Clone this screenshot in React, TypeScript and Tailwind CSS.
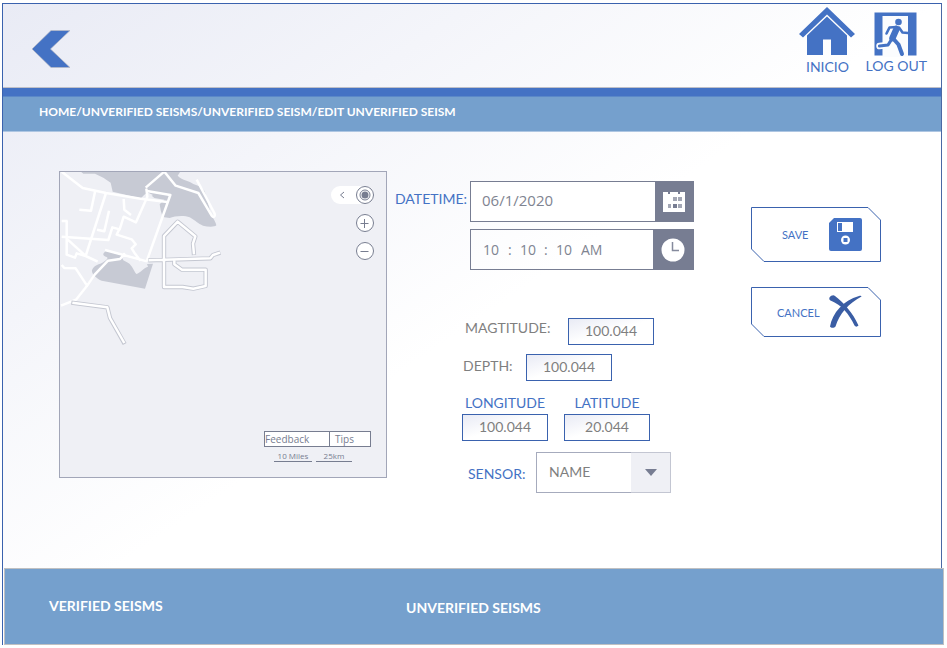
import type { ReactNode } from "react";

const calibri = "font-['Lato',Calibri,sans-serif]";
const segoe = "font-['Open_Sans','Segoe_UI',sans-serif]";

function HomeIcon() {
  return (
    <svg width="56" height="50" viewBox="0 0 56 50" fill="#4472c4" aria-hidden="true">
      <path d="M28 0 56 27l-4 3.500L28 7.500 4 30.500 0 27Z" />
      <path d="M28 9.500 48 28.500V48H32V32.500h-8V48H8V28.500Z" />
    </svg>
  );
}

function ExitIcon() {
  return (
    <svg width="44" height="45" viewBox="0 0 44 45" aria-hidden="true">
      <path d="M.5.5h42v43H.5Z" fill="#4472c4" />
      <path d="M8.500 4h25.500v41H8.500Z" fill="#fbfcfe" />
      <path d="M17.500 27.500 14 33 5.500 34" fill="none" stroke="#fbfcfe" strokeWidth="6.500" strokeLinecap="round" strokeLinejoin="round" />
      <circle cx="24.500" cy="10" r="3.300" fill="#4472c4" />
      <g fill="none" stroke="#4472c4" strokeLinecap="round" strokeLinejoin="round">
        <path d="M12.500 21.500 15.500 15.500 22.500 15" strokeWidth="2.600" />
        <path d="M22.500 17 18.500 26" strokeWidth="6.500" />
        <path d="M25 15.500 28.500 20.500 34 21" strokeWidth="2.600" />
        <path d="M17.500 27.500 14 33 5.500 34" strokeWidth="3.200" />
        <path d="M20 27.500 24.500 32.500 28 42" strokeWidth="4" />
      </g>
    </svg>
  );
}

function FloppyIcon() {
  return (
    <svg width="33" height="33" viewBox="0 0 33 33" aria-hidden="true">
      <path d="M5 0h26a2 2 0 0 1 2 2v29a2 2 0 0 1-2 2H2a2 2 0 0 1-2-2V5Z" fill="#4472c4" />
      <path d="M8 4h16v10H8Z" fill="#fff" />
      <path d="M9 5h4v8H9Z" fill="#4472c4" />
      <circle cx="16.500" cy="22" r="4.500" fill="#fff" />
      <path d="M14.500 20h4v4h-4Z" fill="#4472c4" />
    </svg>
  );
}

function CrossIcon() {
  return (
    <svg width="33" height="34" viewBox="0 0 33 34" fill="#3a5da4" aria-hidden="true">
      <path d="M.5 2.500C2 .5 4.500-.5 6 1c9 7 18 17 23.500 29.500-1.500 1.500-3 1.500-4 0C20 19 13 10 1.500 5.500.5 5 0 3.500.5 2.500Z" />
      <path d="M32.500 1.500C20 8 10 19 6.500 31.500c-1 1.500-4.500 2-5.500 0C3.500 18 14 5.500 30 1c1.500-.3 2.500-.3 2.500.5Z" />
    </svg>
  );
}

function CalendarIcon() {
  return (
    <svg width="22" height="22" viewBox="0 0 22 22" aria-hidden="true">
      <path d="M0 1h5v2h2V1h8v2h2V1h5v20H0Z" fill="#fff" />
      <path d="M10 6h4v4h-4ZM15 6h4v4h-4ZM5 13h3v4H5ZM15 13h4v4h-4Z" fill="#a3a7b5" />
      <path d="M10 13h4v4h-4Z" fill="#777d92" />
    </svg>
  );
}

function ClockIcon() {
  return (
    <svg width="24" height="24" viewBox="0 0 24 24" aria-hidden="true">
      <circle cx="12" cy="12" r="11.500" fill="#fff" />
      <path d="M11.500 4v8.500H18" fill="none" stroke="#858a9d" strokeWidth="1.500" />
    </svg>
  );
}

function StreetMap() {
  return (
    <svg className="absolute inset-0 size-full" viewBox="0 0 326 305" preserveAspectRatio="xMinYMin slice" role="img" aria-label="Map">
      <g transform="translate(-5 -7) scale(.33333)" fill="none" strokeLinejoin="round">
        <path
          fill="#c7cad4"
          d="M75 18H377l-9 14c15 15 35 15 47 25l22 8 12 14 5 17 13 48c8 18 16 28 17 37-6 6-25 5-40 1-15-6-22-15-40-25-15-7-45-5-60 2l-21-3-6-20-3-18 14-14-30-5-17-15c-12-1-17 13-25 16l-83-20-6-27-22-15-25-12H85Z"
        />
        <path fill="#eff0f5" d="m276 82 18 8-22 13Z" />
        <path fill="#c7cad4" d="m152 257 45 12 8 17 15 8c12 8 16 23 24 33 12-3 24-20 35-22l-3-8 18-1-24 75-130-24c-14-6-31-20-29-31 2-8 10-16 25-20 11-5 18-10 22-17-3-5-15-4-13-13Z" />
        <g stroke="#fff" strokeWidth="7.500">
          <path d="m20 20 63 49 70 15 104 17 80 10" />
          <path d="M121 76 108 137 73 134M153 84 92 273l-57-52M35 168v101l25 9 5-13 27 8 36 17" />
          <path d="M20 168h18M20 215l140 10 12-38 22 6 12-38 37 17 34-77-3-24M272 68l56-48 34 42 68 22 40 68c5 8 12 2 8-8L425 44M276 78l70 12-71 199" />
          <path d="m206 102 2 32 20 16M162 137l-14 62-22-5M192 194l-7 15 45 14 12 15-12 12 8 13 18 24M150 255l126 34M210 265l-15 17-36 5-40 42-24 35-32 40-45 18M20 300l8 9 34 1 34 52" />
        </g>
        <g stroke="#c4c7d1" strokeWidth="13">
          <path d="M280 286 466 280l8-10 22-7M417 270l-3-34 7-22-53-44-41 43v153h56l32 5 37-8v-49H381l-23-16v-13M49 413l108 14 8 32 44 78" />
        </g>
        <g stroke="#fff" strokeWidth="7.500">
          <path d="M281 286 466 280l8-10 21-7M417 268l-3-32 7-22-53-44-41 43v153h56l32 5 37-8v-49H381l-23-16v-12M52 413l105 14 8 32 43 75" />
        </g>
      </g>
    </svg>
  );
}

function MapButton({ label, children }: { label: string; children: ReactNode }) {
  return (
    <button aria-label={label} className="block size-[18px] rounded-full bg-white">
      <svg width="18" height="18" viewBox="0 0 18 18" fill="none" stroke="#777d90" aria-hidden="true">
        <circle cx="9" cy="9" r="8.500" />
        {children}
      </svg>
    </button>
  );
}

function MapPanel() {
  return (
    <section className={`relative flex h-[307px] w-[328px] shrink-0 flex-col items-end justify-between overflow-hidden border border-[#a2a6b8] bg-[#eff0f5] ${segoe} text-[#777d90]`}>
      <StreetMap />
      <div className="relative mt-3.5 mr-3 flex flex-col items-end gap-2.5">
        <div className="flex w-[43px] items-center justify-between rounded-full bg-white">
          <button aria-label="Collapse" className="pl-2">
            <svg width="6" height="8" viewBox="0 0 6 8" fill="none" stroke="#777d90" aria-hidden="true">
              <path d="M5 1 1.500 4 5 7" />
            </svg>
          </button>
          <MapButton label="My location">
            <circle cx="9" cy="9" r="5" />
            <circle cx="9" cy="9" r="3.500" fill="#777d90" stroke="none" />
          </MapButton>
        </div>
        <MapButton label="Zoom in">
          <path d="M4.500 9.500h8M8.500 5v9" />
        </MapButton>
        <MapButton label="Zoom out">
          <path d="M4.500 9.500h8" />
        </MapButton>
      </div>
      <div className="relative mr-[15px] mb-[15px] flex w-[107px] flex-col">
        <div className="flex h-4 border border-[#777d90] bg-white text-[10px] leading-[14px]">
          <button className="w-[65px] border-r border-[#777d90] text-left">Feedback</button>
          <button className="flex-1 pl-[5px] text-left">Tips</button>
        </div>
        <div className="mt-1 flex gap-1 pl-2.5 text-[8px] leading-[10px]">
          <span className="w-[38px] border-b border-[#777d90] text-center">10 Miles</span>
          <span className="w-[36px] border-b border-[#777d90] text-center">25km</span>
        </div>
      </div>
    </section>
  );
}

function NumberBox({ id, value }: { id: string; value: string }) {
  return (
    <input
      id={id}
      defaultValue={value}
      className="h-[27px] w-[86px] border border-[#3a62ae] bg-linear-to-br from-[#e9ebf5] to-white to-50% pb-0.5 text-center text-sm text-[#7f7f7f]"
    />
  );
}

function ActionButton({ label, points, className, children }: { label: string; points: string; className: string; children: ReactNode }) {
  return (
    <button className={`relative flex w-[130px] items-center justify-between pr-[19px] text-[11px] text-[#4472c4] ${className}`}>
      <svg className="absolute inset-0 size-full" fill="none" stroke="#3a62ae" aria-hidden="true">
        <polygon points={points} />
      </svg>
      <span className="pt-0.5">{label}</span>
      {children}
    </button>
  );
}

function TimePart({ label, value, className }: { label: string; value: string; className: string }) {
  return <input aria-label={label} defaultValue={value} className={`bg-transparent ${className}`} />;
}

export default function App() {
  return (
    <div className={`min-h-screen bg-white pt-[3px] pr-[5px] pb-[3px] pl-[2px] ${calibri}`}>
      <div className="flex min-h-[calc(100vh-6px)] flex-col border border-r-[#4a69a5] border-b-0 border-[#3a62ae] bg-linear-to-br from-[#e9ebf5] to-white to-50%">
        <header className="flex h-[83px] items-start justify-between pr-3.5 pl-7">
          <button aria-label="Back" className="mt-[26px]">
            <svg width="40" height="38" viewBox="0 0 40 38" aria-hidden="true">
              <path d="M20 .5h19L19.500 19 39 37.500H20L1 19Z" fill="#4472c4" stroke="#b8bac4" strokeWidth=".7" />
            </svg>
          </button>
          <nav className="flex gap-2.5 text-sm text-[#4472c4]">
            <a href="#inicio" className="flex flex-col items-center pt-[3px]">
              <HomeIcon />
              <span className="leading-5">INICIO</span>
            </a>
            <a href="#logout" className="flex flex-col items-center pt-2">
              <ExitIcon />
              <span className="leading-[18px]">LOG OUT</span>
            </a>
          </nav>
        </header>

        <div className="h-[9px] border-t border-[#bfc0c8] bg-[#4472c4]" />
        <div className="flex h-9 items-center border-t border-b border-t-[#5b88c8] border-b-[#aec6e2] bg-[#75a0cd] pb-1 pl-9 text-xs font-bold text-white">
          HOME/UNVERIFIED SEISMS/UNVERIFIED SEISM/EDIT UNVERIFIED SEISM
        </div>

        <main className="flex flex-1 items-start px-14 pt-[39px] pb-[75px]">
          <MapPanel />

          <form className="ml-2 w-[299px] shrink-0 pt-2.5 text-sm">
            <div className="flex justify-between">
              <label htmlFor="date" className="pt-2 leading-5 text-[#4472c4]">DATETIME:</label>
              <div className={`flex w-[224px] flex-col gap-[7px] text-[#7f8491] ${segoe}`}>
                <div className="flex h-[41px] border border-[#777d92] bg-white">
                  <input id="date" defaultValue="06/1/2020" className="min-w-0 flex-1 pb-0.5 pl-[11px] text-[15px]" />
                  <button type="button" aria-label="Pick a date" className="grid w-[38px] place-items-center bg-[#777d92]">
                    <CalendarIcon />
                  </button>
                </div>
                <div className="flex h-[41px] items-center border border-[#777d92] pl-3">
                  <TimePart label="Hours" value="10" className="w-[25px]" />
                  <span className="w-3">:</span>
                  <TimePart label="Minutes" value="10" className="w-6" />
                  <span className="w-3">:</span>
                  <TimePart label="Seconds" value="10" className="w-[25px]" />
                  <TimePart label="AM or PM" value="AM" className="min-w-0 flex-1" />
                  <button type="button" aria-label="Pick a time" className="grid h-full w-10 place-items-center bg-[#777d92]">
                    <ClockIcon />
                  </button>
                </div>
              </div>
            </div>

            <div className="mt-12 flex pl-[70px] text-[#7f7f7f]">
              <label htmlFor="magnitude" className="w-[103px] leading-5">MAGTITUDE:</label>
              <NumberBox id="magnitude" value="100.044" />
            </div>
            <div className="mt-[9px] flex pl-[68px] text-[#7f7f7f]">
              <label htmlFor="depth" className="w-[63px] leading-6">DEPTH:</label>
              <NumberBox id="depth" value="100.044" />
            </div>
            <div className="mt-3 flex gap-4 pl-[67px] text-[#4472c4]">
              <div className="flex flex-col">
                <label htmlFor="longitude" className="pb-0.5 text-center leading-[19px]">LONGITUDE</label>
                <NumberBox id="longitude" value="100.044" />
              </div>
              <div className="flex flex-col">
                <label htmlFor="latitude" className="pb-0.5 text-center leading-[19px]">LATITUDE</label>
                <NumberBox id="latitude" value="20.044" />
              </div>
            </div>
            <div className="mt-[11px] flex items-center pl-[73px]">
              <label htmlFor="sensor" className="w-[68px] pt-0.5 text-[#4472c4]">SENSOR:</label>
              <div className="relative h-[41px] w-[135px]">
                <select id="sensor" className="size-full appearance-none border border-[#a6abbd] bg-white pb-0.5 pl-3 text-[#7f7f7f]">
                  <option>NAME</option>
                </select>
                <span className="pointer-events-none absolute inset-y-0 right-0 grid w-10 place-items-center border border-l-0 border-[#c3c6d2] bg-[#eff0f5]">
                  <svg width="12" height="7" viewBox="0 0 12 7" aria-hidden="true">
                    <path d="M0 0h12L6 7Z" fill="#777d92" />
                  </svg>
                </span>
              </div>
            </div>
          </form>

          <div className="ml-[57px] flex flex-col gap-[25px] pt-9">
            <ActionButton label="SAVE" points="0.5,0.5 117,0.5 129.5,13 129.5,54.5 13,54.5 0.5,42" className="h-[55px] pl-[31px]">
              <FloppyIcon />
            </ActionButton>
            <ActionButton label="CANCEL" points="0.5,0.5 117,0.5 129.5,13 129.5,49.5 13,49.5 0.5,37" className="h-[50px] pl-[26px]">
              <CrossIcon />
            </ActionButton>
          </div>
        </main>

        <footer className="-mr-[3px] ml-px flex h-[77px] border border-[#bfc0c2] bg-[#75a0cd] pl-11 text-sm font-bold text-white">
          <a href="#verified" className="w-[357px] pt-[27px] leading-5">VERIFIED SEISMS</a>
          <a href="#unverified" className="pt-[29px] leading-5">UNVERIFIED SEISMS</a>
        </footer>
      </div>
    </div>
  );
}
